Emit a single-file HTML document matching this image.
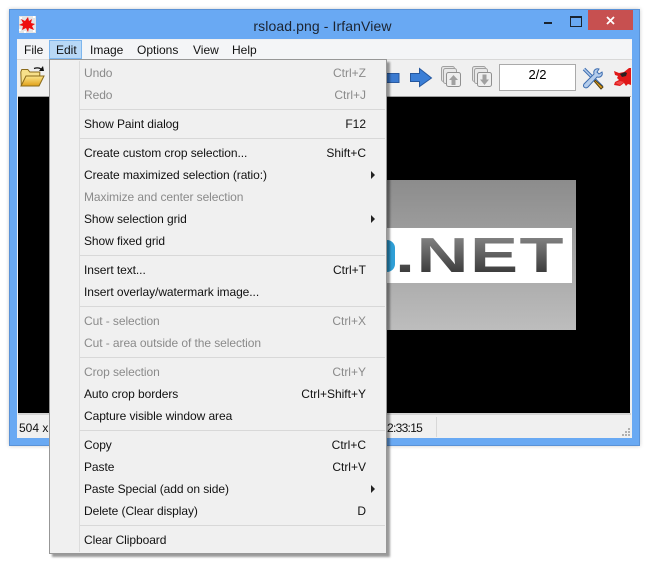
<!DOCTYPE html>
<html><head><meta charset="utf-8"><style>
html,body{margin:0;padding:0;background:#fff}
body{width:646px;height:576px;position:relative;overflow:hidden;font:12px "Liberation Sans",sans-serif;color:#111}
div,span,svg{position:absolute}
.t{white-space:nowrap;line-height:16px;height:16px}
.m{top:42px}
.i{left:84px;letter-spacing:-.07px}
.s{right:280px;letter-spacing:0}
.d{color:#8a8a8a}
.sep{left:80px;width:305px;height:1px;background:#d8d8d8}
.ar{left:371px;width:0;height:0;border-left:4px solid #222;border-top:4px solid transparent;border-bottom:4px solid transparent}
</style></head><body>
<div style="left:9px;top:9px;width:631px;height:437px;background:#69a9f3;border:1px solid #5a92d6;box-sizing:border-box;box-shadow:0 0 4px rgba(0,0,0,.2)"></div>
<svg style="left:19px;top:16px" width="17" height="17" viewBox="0 0 17 17"><rect width="17" height="17" fill="#e4e4e4"/><path d="M1 1h2v2H1zM14 0h2v2h-2zM0 13h2v2H0zM14 14h2v2h-2zM5 15h2v2H5z" fill="#fff"/><path d="M9 1l1 4 3-2-1 4 4 1-3 2 2 4-5-2-1 4-2-4-4 2 1-4-4-1 4-2-2-4 4 2z" fill="#ee0d0d"/></svg>
<div class="t" style="left:0;width:645px;top:17px;height:18px;line-height:18px;text-align:center;font-size:14px;color:#1c2430;letter-spacing:.1px">rsload.png - IrfanView</div>
<div style="left:544px;top:22px;width:8px;height:2px;background:#1a2430"></div>
<div style="left:570px;top:16px;width:10px;height:8px;border:1px solid #1a2430;border-top-width:2px"></div>
<div style="left:588px;top:10px;width:45px;height:20px;background:#c75050"></div>
<svg style="left:606px;top:16px" width="9" height="9"><path d="M1 1l7 7M8 1l-7 7" stroke="#fff" stroke-width="1.8"/></svg>

<div style="left:17px;top:39px;width:615px;height:399px;background:#f0f0f0"></div>
<div style="left:17px;top:40px;width:615px;height:19px;background:#f4f5f7"></div>
<div style="left:17px;top:59px;width:615px;height:1px;background:#d8d8d8"></div>
<div style="left:49px;top:40px;width:33px;height:19px;background:#b8d8f6;border:1px solid #7db6ee;box-sizing:border-box"></div>
<div class="t m" style="left:24px">File</div>
<div class="t m" style="left:56px">Edit</div>
<div class="t m" style="left:90px">Image</div>
<div class="t m" style="left:137px">Options</div>
<div class="t m" style="left:193px">View</div>
<div class="t m" style="left:232px">Help</div>

<div style="left:18px;top:96px;width:613px;height:1px;background:#a0a0a0"></div>
<svg style="left:20px;top:65px" width="25" height="23" viewBox="0 0 25 23"><defs><linearGradient id="f" x1="0" y1="0" x2="0" y2="1"><stop offset="0" stop-color="#fbe58a"/><stop offset="1" stop-color="#e0a018"/></linearGradient></defs><path d="M.8 7l1-2.500h6l2 2.500h10v4l-15 8-3.500 1.500z" fill="#f7e08a" stroke="#8a6a1a"/><path d="M6 11h18l-5 10H1z" fill="url(#f)" stroke="#8a6a1a"/><path d="M14 3.500c3-1 5-1 7 .5" fill="none" stroke="#111" stroke-width="1.200"/><path d="M19 6l5 0-1-5z" fill="#111"/></svg>

<svg style="left:387px;top:67px" width="46" height="21" viewBox="0 0 46 21"><rect x="-2" y="6.500" width="14" height="9" fill="#3b7ad0" stroke="#2a5aa0"/><path d="M23.500 6.500h9V1.500l12 9.500-12 8.500v-5h-9z" fill="#3a7ed6" stroke="#25579e"/></svg>
<svg style="left:441px;top:65px" width="21" height="23" viewBox="0 0 21 23"><rect x=".5" y="1.500" width="13" height="15" rx="2" fill="#e4e4e4" stroke="#a0a0a0"/><rect x="2.500" y="3.500" width="13" height="15" rx="2" fill="#e8e8e8" stroke="#a0a0a0"/><rect x="5.500" y="7.500" width="14" height="14" rx="2" fill="#eee" stroke="#909090"/><path d="M12.500 10l4.500 5h-2.500v5h-4v-5H8z" fill="#a0a0a0"/></svg>
<svg style="left:472px;top:65px" width="21" height="23" viewBox="0 0 21 23"><rect x=".5" y="1.500" width="13" height="15" rx="2" fill="#e4e4e4" stroke="#a0a0a0"/><rect x="2.500" y="3.500" width="13" height="15" rx="2" fill="#e8e8e8" stroke="#a0a0a0"/><rect x="5.500" y="7.500" width="14" height="14" rx="2" fill="#eee" stroke="#909090"/><path d="M10.500 9.500h4v5H17l-4.500 5.500L8 14.500h2.500z" fill="#a0a0a0"/></svg>
<div style="left:499px;top:64px;width:77px;height:27px;background:#fff;border:1px solid #aaa;box-sizing:border-box"></div>
<div class="t" style="left:499px;width:77px;top:67px;text-align:center;font-size:13px;color:#000">2/2</div>
<svg style="left:581px;top:66px" width="24" height="24" viewBox="0 0 24 24"><path d="M3 3l18 18" stroke="#3d6db0" stroke-width="3.400"/><path d="M3 3l18 18" stroke="#b5cdec" stroke-width="1.400"/><path d="M14 14l8 7-2 2-7-8z" fill="#e0a020" stroke="#554010"/><path d="M21 6l-3 2-2-2 2-3c-3-1-6 1-5 5L3 18c-2 3 2 5 4 3L16 11c4 1 6-2 5-5z" fill="#b5cdec" stroke="#3d6db0"/></svg>
<svg style="left:612px;top:66px" width="19" height="24" viewBox="0 0 19 24"><path d="M2 5l5 2 5-1 5-4h2v17l-3-1-2 2-2-3-4 3-6-1 1-3 4-2-2-2 1-2-3-1z" fill="#e01818"/><path d="M8 8l5-2 2 1-1 3-4 1z" fill="#2a2020"/><path d="M3 17l5-2 4 1-4 3z" fill="#f04848"/></svg>

<div style="left:18px;top:97px;width:612px;height:316px;background:#000"></div>
<div style="left:380px;top:180px;width:196px;height:150px;background:linear-gradient(#8c8c8c,#bdbdbd)"></div>
<div style="left:380px;top:228px;width:192px;height:55px;background:#fff"></div>
<div style="left:380px;top:240px;width:15px;height:32px;background:#2f9fd6;border-radius:0 8px 8px 0"></div>
<div class="t" style="left:395px;top:226px;height:60px;line-height:60px;font-size:49px;font-weight:bold;letter-spacing:1px;transform:scaleX(1.47);transform-origin:0 0;background:linear-gradient(#808080 20%,#3c3c3c 78%);-webkit-background-clip:text;background-clip:text;color:transparent">.NET</div>

<div style="left:18px;top:413px;width:613px;height:2px;background:#d4d4d4"></div>
<div class="t" style="left:19px;top:420px">504 x</div>
<div class="t" style="left:387px;top:420px;letter-spacing:-.7px">2:33:15</div>
<div style="left:436px;top:417px;width:1px;height:20px;background:#d8d8d8"></div>
<svg style="left:622px;top:428px" width="9" height="9"><path d="M6 0h2v2H6zM3 3h2v2H3zM6 3h2v2H6zM0 6h2v2H0zM3 6h2v2H3zM6 6h2v2H6z" fill="#b0b0b0"/></svg>

<div style="left:49px;top:59px;width:338px;height:495px;background:#f0f0f0;border:1px solid #979797;box-sizing:border-box;box-shadow:3px 3px 2px rgba(0,0,0,.4)"></div>
<div style="left:79px;top:61px;width:1px;height:491px;background:#dcdcdc"></div>

<div class="t i d" style="top:65px">Undo</div><div class="t s d" style="top:65px">Ctrl+Z</div>
<div class="t i d" style="top:87px">Redo</div><div class="t s d" style="top:87px">Ctrl+J</div>
<div class="sep" style="top:109px"></div>
<div class="t i" style="top:116px">Show Paint dialog</div><div class="t s" style="top:116px">F12</div>
<div class="sep" style="top:138px"></div>
<div class="t i" style="top:145px">Create custom crop selection...</div><div class="t s" style="top:145px">Shift+C</div>
<div class="t i" style="top:167px">Create maximized selection (ratio:)</div><div class="ar" style="top:171px"></div>
<div class="t i d" style="top:189px">Maximize and center selection</div>
<div class="t i" style="top:211px">Show selection grid</div><div class="ar" style="top:215px"></div>
<div class="t i" style="top:233px">Show fixed grid</div>
<div class="sep" style="top:255px"></div>
<div class="t i" style="top:262px">Insert text...</div><div class="t s" style="top:262px">Ctrl+T</div>
<div class="t i" style="top:284px">Insert overlay/watermark image...</div>
<div class="sep" style="top:306px"></div>
<div class="t i d" style="top:313px">Cut - selection</div><div class="t s d" style="top:313px">Ctrl+X</div>
<div class="t i d" style="top:335px">Cut - area outside of the selection</div>
<div class="sep" style="top:357px"></div>
<div class="t i d" style="top:364px">Crop selection</div><div class="t s d" style="top:364px">Ctrl+Y</div>
<div class="t i" style="top:386px">Auto crop borders</div><div class="t s" style="top:386px">Ctrl+Shift+Y</div>
<div class="t i" style="top:408px">Capture visible window area</div>
<div class="sep" style="top:430px"></div>
<div class="t i" style="top:437px">Copy</div><div class="t s" style="top:437px">Ctrl+C</div>
<div class="t i" style="top:459px">Paste</div><div class="t s" style="top:459px">Ctrl+V</div>
<div class="t i" style="top:481px">Paste Special (add on side)</div><div class="ar" style="top:485px"></div>
<div class="t i" style="top:503px">Delete (Clear display)</div><div class="t s" style="top:503px">D</div>
<div class="sep" style="top:525px"></div>
<div class="t i" style="top:532px">Clear Clipboard</div>
</body></html>
